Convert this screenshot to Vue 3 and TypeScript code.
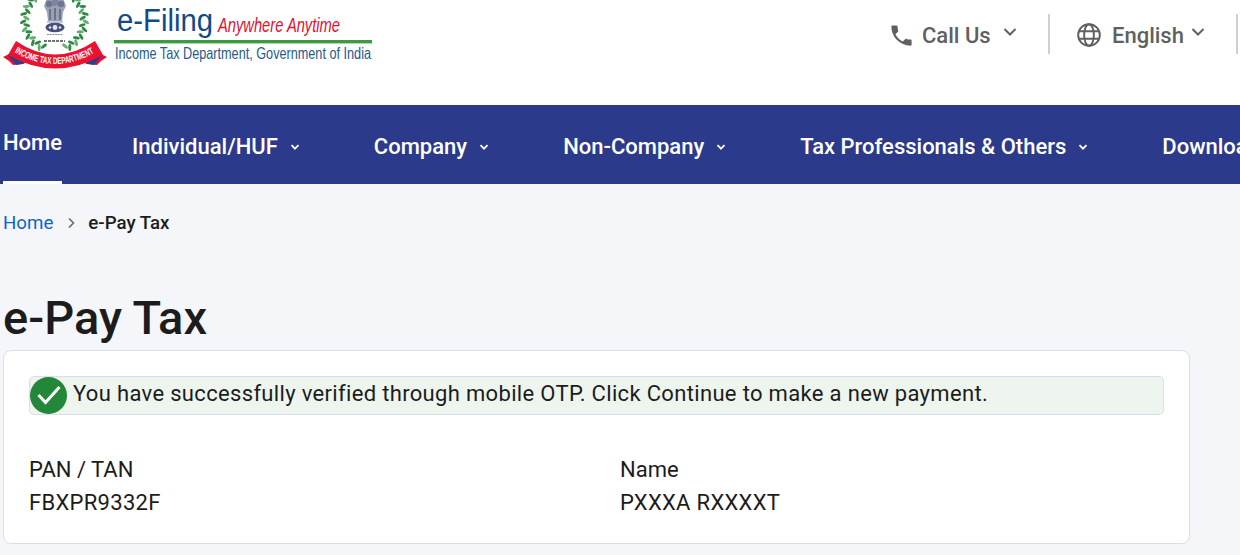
<script setup lang="ts">
interface NavItem { label: string; caret: boolean; active?: boolean }
const nav: NavItem[] = [
  { label: 'Home', caret: false, active: true },
  { label: 'Individual/HUF', caret: true },
  { label: 'Company', caret: true },
  { label: 'Non-Company', caret: true },
  { label: 'Tax Professionals & Others', caret: true },
  { label: 'Downloads', caret: false },
]
// wreath leaves placed around a circle, two rows that tilt in opposite directions
const leaves = Array.from({ length: 40 }, (_, i) => {
  const deg = 158 - (i % 20) * 7.2
  const side = i < 20 ? 1 : -1
  const inner = i % 2 === 0
  const r = inner ? 28.2 : 31.4
  const a = (deg * Math.PI) / 180
  const x = 54.5 + side * r * Math.sin(a)
  const y = 20 - r * Math.cos(a)
  const rot = side * (deg + (inner ? -28 : 28))
  return { x, y, rot, dark: i % 3 !== 0 }
})
</script>

<template>
  <div class="page">
    <header class="top">
      <svg class="logo" width="376" height="75" viewBox="0 0 376 75" role="img">
        <ellipse
          v-for="(l, i) in leaves"
          :key="i"
          :cx="l.x"
          :cy="l.y"
          rx="1.500"
          ry="3.500"
          :fill="l.dark ? '#2c8a42' : '#5fae6e'"
          :transform="`rotate(${l.rot} ${l.x} ${l.y})`"
        />
        <path d="M47 -2 H63 L66 6 L63 12 L62 21 H48 L47 12 L44 6 Z" fill="#9aa1b4" />
        <circle cx="49" cy="4" r="3.200" fill="#6d7591" />
        <circle cx="55" cy="2.500" r="3.400" fill="#7d849d" />
        <circle cx="61" cy="4" r="3.200" fill="#6d7591" />
        <path d="M50 9 V20 M55 8 V20 M60 9 V20" stroke="#5f6785" stroke-width="1.600" />
        <rect x="47" y="21" width="16" height="2" fill="#c2c6d2" />
        <ellipse cx="55" cy="27.500" rx="9.500" ry="4.800" fill="#46507a" />
        <circle cx="55" cy="27.500" r="2.400" fill="#e3e5ee" />
        <circle cx="50" cy="27.500" r="1.300" fill="#e3e5ee" />
        <circle cx="60" cy="27.500" r="1.300" fill="#e3e5ee" />
        <path d="M47 34.500 H63" stroke="#868da3" stroke-width="1.200" stroke-dasharray="2 .7" />
        <path d="M44 41 H65" stroke="#444" stroke-width="1.500" stroke-dasharray="3 1" />
        <path d="M3 57 L9 54 L17 52 L24 64 L13 65 L9 61 Z" fill="#e8102f" />
        <path d="M107 57 L101 54 L93 52 L86 64 L97 65 L101 61 Z" fill="#e8102f" />
        <path d="M8 55 L19 53 L26 63 L16 65 Z" fill="#2a3f8e" />
        <path d="M102 55 L91 53 L84 63 L94 65 Z" fill="#2a3f8e" />
        <path d="M16 41 Q55 68 95 41 L103 55 Q55 82 8 55 Z" fill="#ea1230" />
        <path id="rb" d="M11 50 Q55 78 99 50" fill="none" />
        <text class="ribbon"><textPath href="#rb" startOffset="4" textLength="84" lengthAdjust="spacingAndGlyphs">INCOME TAX DEPARTMENT</textPath></text>
        <text class="ef" x="117" y="31" textLength="96" lengthAdjust="spacingAndGlyphs">e-Filing</text>
        <text class="any" x="218" y="32" textLength="122" lengthAdjust="spacingAndGlyphs">Anywhere Anytime</text>
        <rect x="114" y="40" width="258" height="3.400" fill="#3c9a44" />
        <text class="gov" x="115" y="59" textLength="256" lengthAdjust="spacingAndGlyphs">Income Tax Department, Government of India</text>
      </svg>
      <div class="tools">
        <div class="tool call">
          <svg width="27" height="27" viewBox="0 0 24 24" fill="#5f6062"><path d="M6.600 10.800c1.400 2.800 3.800 5.100 6.600 6.600l2.200-2.200c.3-.3.7-.4 1-.2 1.100.4 2.300.6 3.600.6.6 0 1 .4 1 1V20c0 .6-.4 1-1 1C10.600 21 3 13.400 3 4c0-.6.4-1 1-1h3.500c.6 0 1 .4 1 1 0 1.300.2 2.500.6 3.600.1.300 0 .7-.2 1z"/></svg>
          <span>Call Us</span>
          <svg class="chev" width="18" height="18" viewBox="0 0 18 18"><path d="M3.500 6 9 11.500 14.500 6" fill="none" stroke="#5f6062" stroke-width="2"/></svg>
        </div>
        <div class="tool lang">
          <svg width="26" height="26" viewBox="0 0 24 24" fill="none" stroke="#5f6062" stroke-width="1.800"><circle cx="12" cy="12" r="10"/><ellipse cx="12" cy="12" rx="4.500" ry="10"/><path d="M2.800 8.500h18.400M2.800 15.500h18.400"/></svg>
          <span>English</span>
          <svg class="chev" width="18" height="18" viewBox="0 0 18 18"><path d="M3.500 6 9 11.500 14.500 6" fill="none" stroke="#5f6062" stroke-width="2"/></svg>
        </div>
      </div>
    </header>

    <nav class="nav">
      <a v-for="n in nav" :key="n.label" class="nav-item" :class="{ active: n.active }">
        <span>{{ n.label }}</span>
        <svg v-if="n.caret" width="12" height="12" viewBox="0 0 12 12"><path d="M2.500 4.200 6 7.700l3.500-3.500" fill="none" stroke="#fff" stroke-width="1.800"/></svg>
      </a>
    </nav>

    <div class="crumbs">
      <a class="crumb-link">Home</a>
      <svg width="12" height="12" viewBox="0 0 12 12"><path d="M4 1.500 8.500 6 4 10.500" fill="none" stroke="#6b6b6b" stroke-width="1.600"/></svg>
      <span class="crumb-cur">e-Pay Tax</span>
    </div>

    <h1 class="title">e-Pay Tax</h1>

    <section class="card">
      <div class="alert">
        <span class="check">
          <svg width="24" height="24" viewBox="0 0 24 24"><path d="M1.500 11 8.500 18.500 22.500 3" fill="none" stroke="#fff" stroke-width="3"/></svg>
        </span>
        <span class="alert-text">You have successfully verified through mobile OTP. Click Continue to make a new payment.</span>
      </div>
      <div class="fields">
        <div><div>PAN / TAN</div><div class="val">FBXPR9332F</div></div>
        <div><div>Name</div><div class="val">PXXXA RXXXXT</div></div>
      </div>
    </section>
  </div>
</template>

<style>
html, body { margin: 0; background: #f5f6fa; overflow: hidden; }
</style>

<style scoped>
.page {
  width: 1240px;
  height: 555px;
  overflow: hidden;
  font-family: Roboto, "Liberation Sans", sans-serif;
  color: #1c1c1c;
  background: #f5f6fa;
}
.top {
  height: 105px;
  background: #fff;
  display: flex;
  justify-content: space-between;
  align-items: flex-start;
}
.logo { display: block; }
.ribbon { font: 700 9.500px "Liberation Sans", sans-serif; fill: #fff; }
.ef { font: 400 31px "Liberation Sans", sans-serif; fill: #0f4a8a; }
.any { font: italic 400 19.500px "Liberation Sans", sans-serif; fill: #e0102f; }
.gov { font: 400 16.500px "Liberation Sans", sans-serif; fill: #1d5b8f; }
.tools { display: flex; margin-top: 14px; }
.tool {
  display: flex;
  align-items: center;
  height: 40px;
  padding-top: 2px;
  box-sizing: border-box;
  font-size: 22px;
  font-weight: 500;
  color: #5f6062;
  border-right: 2px solid #cfcfcf;
}
.call { width: 162px; }
.call span { margin: 0 10px 0 7px; }
.lang { width: 162px; margin-left: 26px; margin-right: 2px; }
.lang span { margin: 0 5px 0 10px; }
.chev { margin-top: -6px; }
.nav {
  height: 79px;
  background: #2c3a8c;
  display: flex;
  padding-left: 3px;
  gap: 73px;
  white-space: nowrap;
}
.nav-item {
  display: flex;
  align-items: center;
  gap: 11px;
  color: #fff;
  font-size: 22px;
  font-weight: 500;
  padding-top: 4px;
  box-sizing: border-box;
}
.nav-item.active {
  border-bottom: 3px solid #fff;
  padding-top: 0;
  padding-bottom: 2px;
  margin-right: -3px;
}
.crumbs {
  display: flex;
  align-items: center;
  gap: 11.500px;
  padding: 27px 0 0 3px;
  height: 24px;
  font-size: 18.700px;
}
.crumb-link { color: #0b66c9; }
.crumb-cur { font-weight: 500; color: #1c1c1c; }
.title {
  margin: 58px 0 0 3px;
  font-size: 47px;
  line-height: 50px;
  font-weight: 500;
  color: #1c1c1c;
}
.card {
  margin: 7px 0 0 3px;
  width: 1187px;
  height: 194px;
  box-sizing: border-box;
  background: #fff;
  border: 1px solid #dcdcec;
  border-radius: 8px;
  padding: 25px 25px 0;
  font-size: 22px;
}
.alert {
  display: flex;
  align-items: center;
  gap: 6px;
  height: 39px;
  box-sizing: border-box;
  background: #edf5ee;
  border: 1px solid #dcdcec;
  border-radius: 5px;
  letter-spacing: 0.33px;
}
.alert-text { padding-bottom: 4px; }
.check {
  width: 37px;
  height: 37px;
  border-radius: 50%;
  background: #228738;
  display: flex;
  align-items: center;
  justify-content: center;
}
.fields {
  display: grid;
  grid-template-columns: 591px 1fr;
  margin-top: 39px;
  line-height: 32px;
}
.val { letter-spacing: 0.3px; margin-top: 1px; }
</style>
